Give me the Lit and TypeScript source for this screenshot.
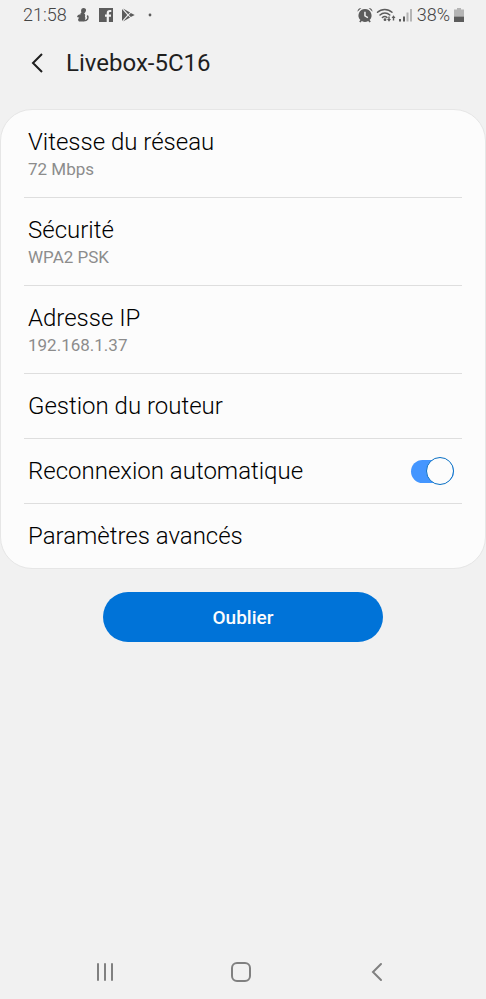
import { LitElement, html, css } from "lit";
import { customElement, state } from "lit/decorators.js";

interface Detail {
  label: string;
  value: string;
}

const DETAILS: Detail[] = [
  { label: "Vitesse du réseau", value: "72 Mbps" },
  { label: "Sécurité", value: "WPA2 PSK" },
  { label: "Adresse IP", value: "192.168.1.37" },
];

@customElement("status-bar")
export class StatusBar extends LitElement {
  static styles = css`
    :host {
      display: flex;
      align-items: center;
      justify-content: space-between;
      height: 30px;
      padding: 0 20px 0 23px;
      color: #5c5c5c;
      font-size: 18px;
      font-weight: 300;
      line-height: 30px;
    }
    .group {
      display: flex;
      align-items: center;
    }
    .left {
      gap: 9px;
    }
    .right {
      gap: 2px;
    }
    .text {
      color: #444;
    }
    svg {
      display: block;
      fill: currentColor;
    }
    .knockout {
      fill: none;
      stroke: #f1f1f1;
      stroke-width: 2.2;
    }
  `;

  render() {
    return html`
      <div class="group left">
        <span class="text">21:58</span>
        <svg width="14" height="14" viewBox="0 0 14 14" aria-hidden="true">
          <path d="M7.500 0c1.800 0 2.800 1 2.500 2.500S9 5 8 5.300c1.400.7 1.400 2 .9 3.200 1 1.500.3 4-1.400 5H3C1.500 12.500 2 10.500 3.300 9.800L1 9C1.500 7 3 6.500 4.500 6.600 4 5.500 5 5 5.500 4.600 4.700 3 5 0 7.500 0z" />
          <path d="M11.300 7.500c1.800 2.600.3 5.300-3.800 5.200" fill="none" stroke="currentColor" stroke-width="1.600" />
        </svg>
        <svg width="14" height="14" viewBox="0 0 14 14" aria-hidden="true">
          <path d="M0 0h14v14H0z" />
          <path class="knockout" d="M12.300 3H11C9.500 3 8.800 3.700 8.800 5.200V14M6 7.600h6" />
        </svg>
        <svg width="15" height="14" viewBox="0 0 15 14" aria-hidden="true">
          <path d="M0 1v12L5.300 7zM1 .5l5.200 5.800 1.900-1.800zM1 13.500l5.200-5.800 1.900 1.800zM8.800 4.900 6.800 7l2 2.100L12.700 7z" />
        </svg>
        <svg width="14" height="14" viewBox="0 0 14 14" aria-hidden="true">
          <circle cx="4" cy="7" r="1.400" />
        </svg>
      </div>
      <div class="group right">
        <svg width="18" height="16" viewBox="0 0 18 16" aria-hidden="true">
          <path fill-rule="evenodd" d="M9 2a6.500 6.500 0 0 1 4.600 11.100l1.200 1.300-1.300 1-1.300-1.300a6.500 6.500 0 0 1-6.400 0l-1.300 1.300-1.300-1 1.200-1.300A6.500 6.500 0 0 1 9 2zM8.200 4.800v4.400l3.300 2 .8-1.200-2.600-1.600V4.800z" />
          <path d="M1.500 4.800C1.500 2.500 3 1 5.300 1zM16.500 4.800C16.500 2.500 15 1 12.700 1z" />
        </svg>
        <svg width="21" height="16" viewBox="0 0 21 16" aria-hidden="true">
          <g fill="none" stroke="currentColor" stroke-width="1.500" stroke-linecap="round">
            <path d="M1.500 5.300C5.500 1.400 12 1.400 16 5.300M4 8c2.800-2.700 7-2.700 9.800 0M6.400 10.500c1.500-1.400 3.300-1.400 4.600 0" />
          </g>
          <circle cx="9" cy="12.700" r="1.400" />
          <path d="M12.300 9.500h1.400v2.500H15l-2 2.700-2-2.700h1.300zM16.800 13.500h1.400v-2.500h1.300l-2-2.700-2 2.700h1.300z" />
        </svg>
        <svg width="16" height="16" viewBox="0 0 16 16" aria-hidden="true">
          <path d="M0 12h2v2.500H0zM4 9.500h2v5H4z" />
          <path d="M7.500 5.500h2v9h-2zM11 2h2v12.500h-2z" opacity=".4" />
        </svg>
        <span class="text">38%</span>
        <svg width="14" height="16" viewBox="0 0 14 16" aria-hidden="true">
          <path d="M5 1h4v1.500h3V9.500H2V2.500h3z" opacity=".4" />
          <path d="M2 9.500h10V15H2z" />
        </svg>
      </div>
    `;
  }
}

@customElement("app-root")
export class AppRoot extends LitElement {
  static styles = css`
    :host {
      display: flex;
      flex-direction: column;
      min-height: 100vh;
      background: #f1f1f1;
      color: #1f1f1f;
      font-family: Roboto, "Noto Sans", sans-serif;
    }
    * {
      box-sizing: border-box;
    }
    button {
      margin: 0;
      padding: 0;
      border: 0;
      background: none;
      color: inherit;
      font: inherit;
      cursor: pointer;
    }
    svg {
      display: block;
      fill: none;
      stroke: currentColor;
    }
    header {
      display: flex;
      align-items: center;
      gap: 12px;
      height: 65px;
      margin-bottom: 14px;
      padding: 0 20px;
    }
    .back {
      display: grid;
      place-items: center;
      width: 34px;
      height: 40px;
    }
    h1 {
      margin: 0;
      font-size: 24px;
      font-weight: 400;
      line-height: 32px;
    }
    .card {
      margin: 0;
      padding: 0 23px;
      border: 1px solid #e6e6e6;
      border-radius: 32px;
      background: #fcfcfc;
      list-style: none;
    }
    .row {
      display: flex;
      align-items: center;
      justify-content: space-between;
      width: 100%;
      min-height: 64px;
      padding: 0 8px 0 4px;
      color: #000;
      font-size: 24px;
      font-weight: 300;
      line-height: 32px;
      text-align: left;
    }
    .item + .item {
      border-top: 1px solid #dedede;
    }
    .detail {
      display: block;
      padding: 16px 4px;
    }
    .value {
      display: block;
      color: #8c8c8c;
      font-size: 17px;
      font-weight: 400;
      line-height: 23px;
    }
    .switch {
      appearance: none;
      display: flex;
      align-items: center;
      justify-content: flex-end;
      width: 43px;
      height: 23px;
      margin: 0;
      border-radius: 12px;
      background: #4496ff;
      cursor: pointer;
    }
    .switch::before {
      content: "";
      flex: none;
      width: 26px;
      height: 26px;
      border: 1px solid #0a70c4;
      border-radius: 50%;
      background: #fcfcfc;
    }
    .switch:not(:checked) {
      justify-content: flex-start;
      background: #c4c4c4;
    }
    .forget {
      align-self: center;
      width: 280px;
      max-width: 100%;
      height: 50px;
      margin-top: 23px;
      border-radius: 25px;
      background: #0073d8;
      color: #fcfcfc;
      font-size: 19px;
      font-weight: 500;
    }
    nav {
      display: flex;
      justify-content: center;
      gap: 88px;
      margin-top: auto;
      padding: 0 4px 3px 0;
      color: #808080;
    }
    .key {
      display: grid;
      place-items: center;
      width: 48px;
      height: 48px;
    }
  `;

  @state() private reconnect = true;

  private toggle(event: Event) {
    this.reconnect = (event.target as HTMLInputElement).checked;
  }

  private action(label: string) {
    return html`<li class="item"><button class="row" type="button">${label}</button></li>`;
  }

  render() {
    return html`
      <status-bar></status-bar>
      <header>
        <button class="back" type="button" aria-label="Retour">
          <svg width="14" height="22" viewBox="0 0 14 22" stroke-width="2">
            <path d="M12 2 3 11l9 9" />
          </svg>
        </button>
        <h1>Livebox-5C16</h1>
      </header>
      <ul class="card">
        ${DETAILS.map(
          (d) => html`
            <li class="item">
              <div class="row detail">${d.label}<span class="value">${d.value}</span></div>
            </li>
          `
        )}
        ${this.action("Gestion du routeur")}
        <li class="item">
          <label class="row">
            Reconnexion automatique
            <input class="switch" type="checkbox" role="switch" .checked=${this.reconnect} @change=${this.toggle} />
          </label>
        </li>
        ${this.action("Paramètres avancés")}
      </ul>
      <button class="forget" type="button">Oublier</button>
      <nav aria-label="Navigation">
        <button class="key" type="button" aria-label="Applications récentes">
          <svg width="20" height="20" viewBox="0 0 20 20" stroke-width="2" stroke-linecap="round">
            <path d="M3 2v16M10 2v16M17 2v16" />
          </svg>
        </button>
        <button class="key" type="button" aria-label="Accueil">
          <svg width="20" height="20" viewBox="0 0 20 20" stroke-width="2">
            <rect x="1" y="1" width="18" height="18" rx="5" />
          </svg>
        </button>
        <button class="key" type="button" aria-label="Retour">
          <svg width="20" height="20" viewBox="0 0 20 20" stroke-width="2" stroke-linecap="round">
            <path d="M14 2 6 10l8 8" />
          </svg>
        </button>
      </nav>
    `;
  }
}
